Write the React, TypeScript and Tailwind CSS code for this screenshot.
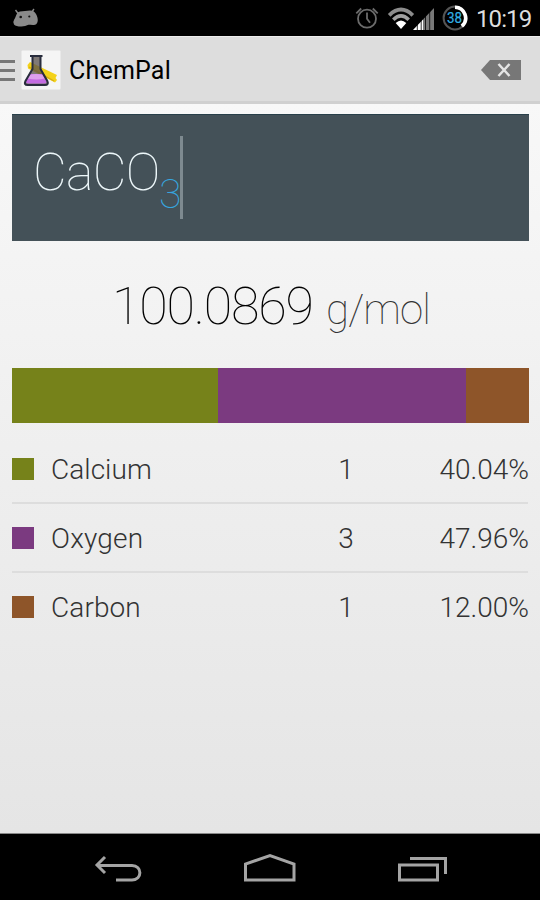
const elements = [
  { name: "Calcium", count: 1, percent: "40.04%", swatch: "bg-[#76821a]", bar: "w-[206px]", tracking: "tracking-[0.05px]" },
  { name: "Oxygen", count: 3, percent: "47.96%", swatch: "bg-[#7b3a80]", bar: "w-[248px]", tracking: "tracking-[0.2px]" },
  { name: "Carbon", count: 1, percent: "12.00%", swatch: "bg-[#8e5529]", bar: "w-[63px]", tracking: "tracking-[0.1px]" },
];

function StatusBar() {
  return (
    <div className="flex h-9 items-start bg-black">
      <svg className="ml-3 mt-2 h-5 w-7" viewBox="0 0 28 20">
        <path d="M3.5 2l3 4M22 1l-3 4" stroke="#8a8a8a" strokeWidth="1.4" />
        <path d="M4.5 6.5Q5 4 8 3.5L18 2.6Q22 2.6 24 6Q26.5 10.5 25.5 14Q24.5 17.5 21 17Q18.5 16.5 16.5 16.8Q13 18.7 9 18.6Q4 18.5 2 16.5Q.5 14 2 12Q3.2 10 4.5 6.5Z" fill="#8a8a8a" />
        <circle cx="8.7" cy="9" r="1.3" fill="#111" />
        <circle cx="17.3" cy="8.5" r="1.1" fill="#111" />
      </svg>
      <svg className="ml-auto mr-[8px] mt-[6px] h-6 w-6" viewBox="0 0 24 24" fill="none" stroke="#6c6c6c" strokeWidth="1.8">
        <circle cx="12" cy="12.7" r="9" />
        <path d="M12 6.5v6.2l3 4M1.3 7.3L6.2 2.5M17.8 2.5L22.7 7.3" />
      </svg>
      <svg className="mt-[7px] h-6 w-[48px]" viewBox="0 0 48 24">
        <path d="M2.2 8.3Q14-3.2 25.8 8.3" fill="none" stroke="#8c8c8c" strokeWidth="3.8" />
        <path d="M6.3 12.7Q14 5.2 21.7 12.7" fill="none" stroke="#a0a0a0" strokeWidth="3.6" />
        <path d="M8.7 16Q14 11 19.3 16L14 22Z" fill="#fff" />
        <path d="M26 23L36 12.5V23Z" fill="#fff" />
        <path d="M36 12.5L47 1V23H36Z" fill="#787878" />
        <path d="M30.3 16v7M34.2 12v11M38.5 8v15M42.7 4v19" stroke="#000" strokeWidth=".8" />
      </svg>
      <svg className="ml-[6px] mt-[4px] h-7 w-7" viewBox="0 0 28 28">
        <circle cx="14" cy="14" r="11.4" fill="none" stroke="#555" strokeWidth="2" />
        <path d="M14 3.2A10.8 10.8 0 0 1 20.8 22.2" fill="none" stroke="#fff" strokeWidth="3.6" />
        <text x="13.6" y="19" textAnchor="middle" fill="#31b0e5" stroke="#31b0e5" strokeWidth=".2" fontSize="14.5" fontFamily="Roboto, sans-serif" textLength="15" lengthAdjust="spacingAndGlyphs">38</text>
      </svg>
      <span className="ml-[7px] mr-2 w-[56px] whitespace-nowrap text-2xl leading-[38px] tracking-[-0.9px] text-[#ddd]">10:19</span>
    </div>
  );
}

function FlaskLogo() {
  return (
    <svg className="h-10 w-10" viewBox="0 0 40 40">
      <rect x=".5" y=".5" width="39" height="39" rx="1" fill="#f5f5f5" />
      <path d="M9 12L36 25L34.5 28L36 30L34 32.5L7 18.5L6.5 15Z" fill="#f4d21a" />
      <path d="M8 17L33 31" stroke="#d6ac12" strokeWidth="1.2" />
      <path d="M11.5 7H19.5V18L27 31Q28 35 25 35H6Q2 35 4 31L11.5 18Z" fill="#574f4b" fillOpacity=".75" />
      <path d="M8.5 24H21.5L25.5 31Q26 33.5 23 33.5H7.5Q4.5 33.5 5 31Z" fill="#c46be2" />
      <path d="M8.5 25Q15 23 21.5 25L23.5 28.5Q16 30.5 6.5 28.5Z" fill="#dda0ed" />
      <path d="M9 6H21.5M11.5 7V19L4.5 31Q2.7 35 6.5 35H24Q28 35 26.3 31L19.5 19V7" fill="none" stroke="#292d3d" strokeWidth="2" />
    </svg>
  );
}

function ActionBar() {
  return (
    <header className="flex h-[68px] items-center border-b-[3px] border-t border-b-[#d0d0d0] border-t-[#eee] bg-[#ddd]">
      <div className="mt-[3px] flex w-[15px] flex-col gap-[6px]">
        <i className="h-[3px] bg-[#777]" />
        <i className="h-[3px] bg-[#777]" />
        <i className="h-[3px] bg-[#777]" />
      </div>
      <div className="ml-[6px] mt-[1px]"><FlaskLogo /></div>
      <h1 className="ml-2 mt-[4px] text-[25px] tracking-[0.2px] text-black">ChemPal</h1>
      <svg className="ml-auto mr-[19px] mt-[1px] h-5 w-10" viewBox="0 0 40 20">
        <path d="M0 10L9 0H40V20H9Z" fill="#777" />
        <path d="M17.5 4L28.5 16M28.5 4L17.5 16" stroke="#e5e5e5" strokeWidth="2.5" />
      </svg>
    </header>
  );
}

function NavigationBar() {
  return (
    <nav className="flex h-[67px] justify-center gap-[100px] border-t border-[#888] bg-black pt-[19px]">
      <svg className="h-[33px] w-[52px]" viewBox="0 0 52 33" fill="none" stroke="#a4a4a4" strokeWidth="3">
        <path d="M14 4L6 12L14 20M6 12.5H41C51.5 12.5 51.5 27 41 27H25" />
      </svg>
      <svg className="h-[33px] w-[54px]" viewBox="0 0 54 33" fill="none" stroke="#a4a4a4" strokeWidth="3">
        <path d="M2.5 27V11L27 2.5L51 11V27Z" />
      </svg>
      <svg className="h-[33px] w-[52px]" viewBox="0 0 52 33" fill="none" stroke="#a4a4a4" strokeWidth="3">
        <path d="M2.5 12H40.5V27H2.5ZM13 5.5H48.5V21" />
      </svg>
    </nav>
  );
}

export default function App() {
  return (
    <div className="flex h-[900px] w-[540px] flex-col overflow-hidden font-['Roboto',sans-serif]">
      <StatusBar />
      <ActionBar />
      <main className="flex min-h-0 flex-1 flex-col bg-linear-to-b from-[#f8f8f8] to-[#e5e5e5] px-[12px] pt-[10px]">
        <section className="mr-[-1px] flex h-[127px] shrink-0 overflow-hidden border-t border-[#29404a] bg-[#445158] pl-[21px]">
          <span className="w-[126px] whitespace-nowrap text-[52px] font-thin leading-[116px] tracking-[-0.7px] text-[#edf7fa]">CaCO</span>
          <span className="mt-[36px] w-[21px] text-[41px] font-thin leading-[86px] text-[#37a5df]">3</span>
          <i className="mt-[21px] h-[83px] w-[3px] bg-[#7e8a90]" />
        </section>
        <section className="flex h-[127px] shrink-0 items-baseline pl-[100px] font-thin text-black">
          <span className="w-[214px] whitespace-nowrap text-[52px] leading-[131px] tracking-[-1.2px]">100.0869</span>
          <span className="whitespace-nowrap text-[42px] leading-none tracking-[-0.9px] text-[#333]">g/mol</span>
        </section>
        <section className="mr-[-1px] flex h-[55px] shrink-0">
          {elements.map((e) => <div key={e.name} className={`${e.swatch} ${e.bar}`} />)}
        </section>
        <section className="mt-[12px] flex flex-col">
          {elements.map((e, i) => (
            <div key={e.name} className={`flex h-[69px] items-center text-[28px] font-light text-[#333] ${i < 2 ? "border-b-2 border-[#ddd]" : "border-b-2 border-transparent"}`}>
              <i className={`h-[22px] w-[22px] ${e.swatch}`} />
              <span className={`ml-[17px] w-[263px] pt-[2px] ${e.tracking}`}>{e.name}</span>
              <span className="w-[64px] pt-[2px] text-center">{e.count}</span>
              <span className="mr-[-1px] flex-1 pt-[2px] text-right">{e.percent}</span>
            </div>
          ))}
        </section>
      </main>
      <NavigationBar />
    </div>
  );
}
